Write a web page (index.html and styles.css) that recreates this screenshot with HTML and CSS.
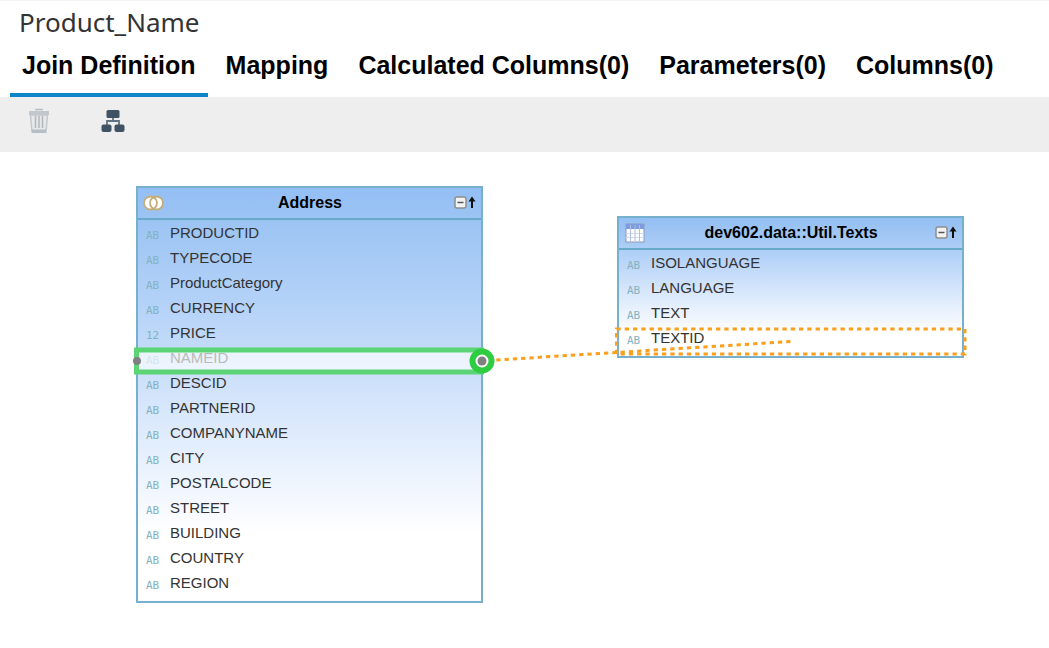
FILE: index.html
```html
<!DOCTYPE html>
<html lang="en">
<head>
<meta charset="utf-8">
<title>Product_Name</title>
<link rel="stylesheet" href="styles.css">
</head>
<body>
<header class="page-header">
  <h1 class="title">Product_Name</h1>
  <div class="tabs" role="tablist">
    <button class="tab tab-active" role="tab" aria-selected="true">Join Definition</button>
    <button class="tab" role="tab">Mapping</button>
    <button class="tab" role="tab">Calculated Columns(0)</button>
    <button class="tab" role="tab">Parameters(0)</button>
    <button class="tab" role="tab">Columns(0)</button>
  </div>
</header>
<div class="toolbar" role="toolbar" aria-label="Join tools">
  <button class="tool" aria-label="Delete" disabled>
    <svg width="24" height="26" viewBox="0 0 24 26" fill="none">
      <path d="M9 2.500V1.500h6v1" stroke="#b5bac0" stroke-width="1.500"/>
      <path d="M3.500 7h17L19 24H5z" fill="#e6e8ea" stroke="#c3c8cd" stroke-width="1.500"/>
      <path d="M2 3h20v4H2z" fill="#c2c7cd"/>
      <path d="M5 21.500h14V25H5z" fill="#b6bec6"/>
      <path d="M8.500 8v12M12 8v12M15.500 8v12" stroke="#b0b6bc" stroke-width="1.500"/>
    </svg>
  </button>
  <button class="tool" aria-label="Auto layout">
    <svg width="24" height="26" viewBox="0 0 24 26">
      <path d="M12 9v4M6 18v-5h12v5" fill="none" stroke="#607384" stroke-width="1.800"/>
      <rect x="5.500" y="2" width="13" height="8" rx="1.500" fill="#3f5365"/>
      <rect x="0.500" y="16.500" width="10" height="7.500" rx="2" fill="#3f5365"/>
      <rect x="13.500" y="16.500" width="10" height="7.500" rx="2" fill="#3f5365"/>
    </svg>
  </button>
</div>
<main class="canvas">
  <section class="node node-address">
    <header class="node-head">
      <svg width="24" height="18" viewBox="0 0 24 18" fill="none">
        <circle cx="8.500" cy="9" r="6.500" fill="#fff"/>
        <circle cx="14.500" cy="9" r="6.500" fill="#fff"/>
        <circle cx="8.500" cy="9" r="6.500" stroke="#c5ad78" stroke-width="1.800"/>
        <circle cx="14.500" cy="9" r="6.500" stroke="#c5ad78" stroke-width="1.800"/>
      </svg>
      <h2 class="node-title">Address</h2>
      <button class="collapse" aria-label="Collapse Address">
        <svg width="22" height="14" viewBox="0 0 22 14">
          <rect x="1" y="1" width="11" height="11" rx="2" fill="#f3f3f3" stroke="#8f8f8f" stroke-width="1.500"/>
          <path d="M3.500 6.500h6" stroke="#555" stroke-width="1.500"/>
          <path d="M18 0.500l3.500 5h-2.500V12h-2V5.500h-2.500z" fill="#111"/>
        </svg>
      </button>
    </header>
    <ul class="fields">
      <li class="field"><span class="kind">AB</span>PRODUCTID</li>
      <li class="field"><span class="kind">AB</span>TYPECODE</li>
      <li class="field"><span class="kind">AB</span>ProductCategory</li>
      <li class="field"><span class="kind">AB</span>CURRENCY</li>
      <li class="field"><span class="kind">12</span>PRICE</li>
      <li class="field"><span class="kind">AB</span>NAMEID</li>
      <li class="field"><span class="kind">AB</span>DESCID</li>
      <li class="field"><span class="kind">AB</span>PARTNERID</li>
      <li class="field"><span class="kind">AB</span>COMPANYNAME</li>
      <li class="field"><span class="kind">AB</span>CITY</li>
      <li class="field"><span class="kind">AB</span>POSTALCODE</li>
      <li class="field"><span class="kind">AB</span>STREET</li>
      <li class="field"><span class="kind">AB</span>BUILDING</li>
      <li class="field"><span class="kind">AB</span>COUNTRY</li>
      <li class="field"><span class="kind">AB</span>REGION</li>
    </ul>
  </section>
  <section class="node node-texts">
    <header class="node-head">
      <svg width="24" height="20" viewBox="0 0 24 20">
        <rect x="3" y="1" width="18" height="18" fill="#fafbfe" stroke="#8d99b5"/>
        <path d="M3 1h18v5H3z" fill="#7f9be0"/>
        <path d="M3 10.500h18M3 14.500h18" stroke="#d3daee"/>
        <path d="M7.500 2v16M12 2v16M16.500 2v16" stroke="#b3bfdf"/>
      </svg>
      <h2 class="node-title">dev602.data::Util.Texts</h2>
      <button class="collapse" aria-label="Collapse dev602.data::Util.Texts">
        <svg width="22" height="14" viewBox="0 0 22 14">
          <rect x="1" y="1" width="11" height="11" rx="2" fill="#f3f3f3" stroke="#8f8f8f" stroke-width="1.500"/>
          <path d="M3.500 6.500h6" stroke="#555" stroke-width="1.500"/>
          <path d="M18 0.500l3.500 5h-2.500V12h-2V5.500h-2.500z" fill="#111"/>
        </svg>
      </button>
    </header>
    <ul class="fields">
      <li class="field"><span class="kind">AB</span>ISOLANGUAGE</li>
      <li class="field"><span class="kind">AB</span>LANGUAGE</li>
      <li class="field"><span class="kind">AB</span>TEXT</li>
      <li class="field"><span class="kind">AB</span>TEXTID</li>
    </ul>
  </section>
  <svg class="links" width="1049" height="496" fill="none">
    <rect x="136.500" y="198" width="345" height="22" fill="#fff" fill-opacity="0.660" stroke="#5bd475" stroke-width="5"/>
    <circle cx="137" cy="209" r="4" fill="#808080"/>
    <path d="M616.500 202V177H965V202H616.500" stroke="#fb9f1c" stroke-width="3" stroke-dasharray="4.300 4"/>
    <path d="M488 208.500L791 189.500" stroke="#fb9f1c" stroke-width="3" stroke-dasharray="4.300 4"/>
    <circle cx="482" cy="209" r="9.500" fill="#fff" stroke="#2ecc40" stroke-width="6"/>
    <circle cx="482" cy="209" r="4.500" fill="#808080"/>
  </svg>
</main>
</body>
</html>
```
FILE: styles.css
```css
* {
  box-sizing: border-box;
}

body {
  margin: 0;
  min-height: 100vh;
  display: flex;
  flex-direction: column;
  background: #fff;
  color: #000;
  font-family: "Liberation Sans", Arial, sans-serif;
}

button {
  margin: 0;
  padding: 0;
  border: 0;
  background: none;
  color: inherit;
  font: inherit;
}

svg {
  display: block;
}

.page-header {
  border-top: 1px solid #f3f3f9;
}

.title {
  margin: 0;
  padding: 3px 19px 0;
  color: #333;
  font: 400 26px/36px "Noto Sans", "Open Sans", sans-serif;
}

.tabs {
  display: flex;
  gap: 6px;
  padding: 0 10px;
}

.tab {
  padding: 9px 12px 12px;
  border-bottom: 4px solid transparent;
  font-size: 25px;
  font-weight: 700;
  line-height: 32px;
  white-space: nowrap;
}

.tab-active {
  border-color: #0f84c9;
}

.toolbar {
  display: flex;
  gap: 50px;
  padding: 11px 27px 18px;
  background: #eee;
}

.canvas {
  position: relative;
  flex: 1;
  min-height: 460px;
  overflow: hidden;
}

.node {
  position: absolute;
  width: 347px;
  padding-bottom: 6px;
  border: 2px solid #76b0cd;
  background: linear-gradient(#94bff5, #9cc4f3 8%, #b4d2f8 28%, #d8e7fc 54%, #fff 84%);
}

.node-address {
  left: 136px;
  top: 34px;
}

.node-texts {
  left: 617px;
  top: 64px;
}

.node-head {
  display: flex;
  align-items: center;
  height: 32px;
  padding: 0 5px 0 4px;
  border-bottom: 2px solid #68a8c8;
}

.node-title {
  flex: 1;
  margin: 0;
  font-size: 16px;
  line-height: 20px;
  text-align: center;
}

.fields {
  margin: 0;
  padding: 0 8px;
  list-style: none;
}

.field {
  display: flex;
  gap: 10px;
  color: #333;
  font-size: 15px;
  line-height: 25px;
}

.kind {
  width: 14px;
  height: 25px;
  padding-top: 3px;
  color: #83b3bf;
  font: 11px/25px "DejaVu Sans Mono", monospace;
}

.links {
  position: absolute;
  left: 0;
  top: 0;
}
```
